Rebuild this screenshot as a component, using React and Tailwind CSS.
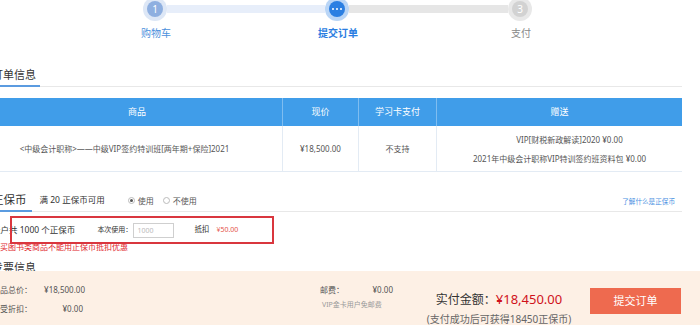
import React from "react";

function StepCircle({ halo, fill, children }) {
  return (
    <div className={`w-[24px] h-[24px] rounded-full flex items-center justify-center shrink-0 ${halo}`}>
      <div className={`w-[16px] h-[16px] rounded-full flex items-center justify-center text-white text-[10px] leading-none ${fill}`}>
        {children}
      </div>
    </div>
  );
}

function Radio({ checked, label }) {
  return (
    <div className="flex items-center gap-[3px]">
      <span className="w-[7px] h-[7px] rounded-full border border-[#bbb] bg-white flex items-center justify-center">
        {checked && <span className="w-[3px] h-[3px] rounded-full bg-[#555]" />}
      </span>
      <span>{label}</span>
    </div>
  );
}

export default function App() {
  return (
    <div className="w-[700px] h-[325px] overflow-hidden relative bg-white font-['Noto_Sans','Noto_Sans_CJK_SC',sans-serif] text-[#333]">
      <div className="h-[271px] overflow-hidden flex flex-col">
        {/* steps */}
        <div className="-mt-[3px] ml-[143px] h-[24px] flex items-center">
          <StepCircle halo="bg-[#dde7f6]" fill="bg-[#8eafe0]">1</StepCircle>
          <div className="w-[158px] h-[8px] bg-[#e7eefa]" />
          <StepCircle halo="bg-[#b9d5f6]" fill="bg-[#2b7fe2]">
            <span className="flex gap-[1.5px]">
              <span className="w-[2.5px] h-[2.5px] rounded-full bg-white" />
              <span className="w-[2.5px] h-[2.5px] rounded-full bg-white" />
              <span className="w-[2.5px] h-[2.5px] rounded-full bg-white" />
            </span>
          </StepCircle>
          <div className="w-[159px] h-[8px] bg-[#e6e6e6]" />
          <StepCircle halo="bg-[#e8e8e8]" fill="bg-[#d2d2d2]">3</StepCircle>
        </div>
        <div className="mt-[5px] flex text-[10px] leading-[14px]">
          <div className="ml-[126px] w-[60px] text-center text-[#4a8fdc]">购物车</div>
          <div className="ml-[122px] w-[60px] text-center text-[#2a7de1] font-bold">提交订单</div>
          <div className="ml-[123px] w-[60px] text-center text-[#888]">支付</div>
        </div>

        <div className="-ml-[8px] w-[690px] flex flex-col">
          {/* order info tab */}
          <div className="mt-[27px] flex border-b border-[#e8e8e8]">
            <span className="text-[11px] leading-[16px] pb-[2px] pr-[4px] border-b-2 border-[#5b9be0] -mb-px text-[#333]">
              订单信息
            </span>
          </div>

          {/* table */}
          <div className="mt-[11px] grid grid-cols-[291px_76px_78px_245px]">
            <div className="h-[28px] bg-[#409de9] text-white text-[9px] flex items-center justify-center border-r border-[#7fbdf0]">商品</div>
            <div className="h-[28px] bg-[#409de9] text-white text-[9px] flex items-center justify-center border-r border-[#7fbdf0]">现价</div>
            <div className="h-[28px] bg-[#409de9] text-white text-[9px] flex items-center justify-center border-r border-[#7fbdf0]">学习卡支付</div>
            <div className="h-[28px] bg-[#409de9] text-white text-[9px] flex items-center justify-center">赠送</div>

            <div className="h-[46px] border-b border-r border-[#e3ebf4] text-[8px] text-[#555] flex items-center justify-center pr-[25px]">
              &lt;中级会计职称&gt;——中级VIP签约特训班[两年期+保险]2021
            </div>
            <div className="h-[46px] border-b border-r border-[#e3ebf4] text-[8px] text-[#555] flex items-center justify-center">
              ¥18,500.00
            </div>
            <div className="h-[46px] border-b border-r border-[#e3ebf4] text-[8px] text-[#555] flex items-center justify-center">
              不支持
            </div>
            <div className="h-[46px] border-b border-[#e3ebf4] text-[8px] leading-[19px] text-[#555] flex flex-col items-center justify-center">
              <span className="pl-[20px]">VIP[财税新政解读]2020 ¥0.00</span>
              <span>2021年中级会计职称VIP特训签约班资料包 ¥0.00</span>
            </div>
          </div>

          {/* coins tab row */}
          <div className="mt-[18px] h-[22px] flex items-stretch border-b border-[#e8e8e8]">
            <span className="flex items-center text-[11.5px] pr-[5px] border-b-2 border-[#5b9be0] -mb-px text-[#333]">
              正保币
            </span>
            <div className="ml-[8px] flex items-center text-[8.5px] text-[#333]">满 20 正保币可用</div>
            <div className="ml-[23px] flex items-center gap-[9px] text-[8px] text-[#555]">
              <Radio checked label="使用" />
              <Radio label="不使用" />
            </div>
            <div className="ml-auto pr-[7px] flex items-center pt-[3px] text-[6.6px] text-[#4a90e2]">了解什么是正保币</div>
          </div>

          {/* coin usage */}
          <div className="mt-[5px] h-[26px] flex items-center">
            <span className="text-[8.5px] text-[#333]">账户共 1000 个正保币</span>
            <span className="ml-[22px] text-[7px] text-[#333]">本次使用：</span>
            <input
              className="ml-[1px] w-[41px] h-[15px] border border-[#cfcfcf] px-[3px] text-[7px] placeholder-[#bbb] focus:outline-none"
              placeholder="1000"
            />
            <span className="ml-[20px] text-[7.5px] text-[#333]">抵扣</span>
            <span className="ml-[7px] text-[7px] text-[#e5544c]">¥50.00</span>
          </div>
          <div className="text-[8px] leading-[8px] text-[#e0252b]">购买图书类商品不能用正保币抵扣优惠</div>

          <div className="mt-[9px] text-[11px] leading-[16px] text-[#333]">发票信息</div>
        </div>
      </div>

      {/* footer */}
      <div className="h-[54px] bg-[#fdf0e5] flex items-start">
        <div className="-ml-[8px] w-[328px] pt-[13px] flex flex-col gap-[7px] text-[8px] leading-[12px] text-[#555]">
          <div className="flex">
            <span className="w-[51px]">商品总价：</span>
            <span className="w-[42px] text-right">¥18,500.00</span>
          </div>
          <div className="flex">
            <span className="w-[51px]">享受折扣：</span>
            <span className="w-[40px] text-right">¥0.00</span>
          </div>
        </div>
        <div className="w-[105px] pt-[14px] text-[#555]">
          <div className="flex w-[73px] justify-between text-[8px] leading-[10px]">
            <span>邮费：</span>
            <span>¥0.00</span>
          </div>
          <div className="mt-[5px] pl-[2px] text-[7px] leading-[10px] text-[#999]">VIP金卡用户免邮费</div>
        </div>
        <div className="w-[148px] pt-[19px] text-center">
          <div className="text-[12px] leading-[18px] text-[#333]">
            实付金额：<span className="text-[13px] text-[#d0121b]">¥18,450.00</span>
          </div>
          <div className="mt-[3px] text-[10px] leading-[14px] text-[#666]">(支付成功后可获得18450正保币)</div>
        </div>
        <button className="ml-[17px] mt-[17px] w-[91px] h-[26px] bg-[#ee6a4f] text-white text-[11px]">提交订单</button>
      </div>

      {/* annotation box */}
      <div className="absolute left-[10px] top-[216px] w-[264px] h-[28px] border-2 border-[#d9363e] pointer-events-none" />
    </div>
  );
}
